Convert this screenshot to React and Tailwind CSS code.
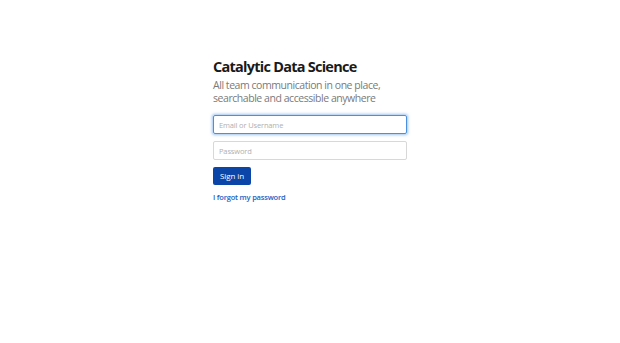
export default function App() {
    return (
        <div className="w-[620px] h-[343px] bg-white" style={{ fontFamily: '"Open Sans", sans-serif' }}>
            <div className="ml-[213px] w-[194px] pt-[58px]">
                <h1 className="text-[14.5px] leading-[18px] font-bold text-[#1a1a1a] tracking-[-0.75px]">Catalytic Data Science</h1>
                <p className="mt-[3px] w-[180px] text-[10.5px] leading-[13px] text-[#7a7a7a] tracking-[-0.45px]">
                    All team communication in one place, searchable and accessible anywhere
                </p>
                <div className="mt-[10px] flex flex-col gap-[7px]">
                    <input
                        className="h-[19px] w-full border border-[#4a90e2] rounded-[2px] px-[5px] text-[7.5px] tracking-[-0.15px] text-[#333] placeholder-[#b0b0b0] outline-none shadow-[0_0_3px_1px_rgba(74,144,226,0.55)]"
                        placeholder="Email or Username"
                        autoFocus
                    />
                    <input
                        type="password"
                        className="h-[19px] w-full border border-[#d8d8d8] rounded-[2px] px-[5px] text-[7.5px] tracking-[-0.15px] text-[#333] placeholder-[#b0b0b0] outline-none"
                        placeholder="Password"
                    />
                </div>
                <button className="mt-[7px] h-[18px] w-[38px] bg-[#0b45a8] rounded-[2px] text-white text-[8px] leading-none tracking-[-0.1px]">Sign in</button>
                <div className="mt-[8px] text-[7.5px] leading-[9px]">
                    <a href="#" className="font-semibold text-[#1a62c4] tracking-[-0.2px]">I forgot my password</a>
                </div>
            </div>
        </div>
    );
}
